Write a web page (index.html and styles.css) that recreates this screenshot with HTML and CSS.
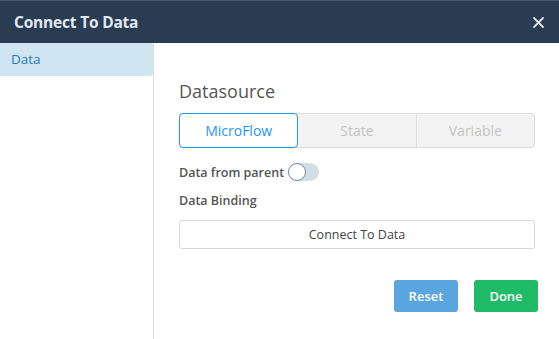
FILE: index.html
```html
<!DOCTYPE html>
<html lang="en">
<head>
    <meta charset="UTF-8">
    <title>Connect To Data</title>
    <link rel="stylesheet" href="styles.css">
</head>
<body>
    <div class="modal">
        <div class="modal-header">
            <span class="modal-title">Connect To Data</span>
            <span class="close">
                <svg width="11" height="11" viewBox="0 0 11 11"><path d="M1 1L10 10M10 1L1 10" stroke="#dfe6ee" stroke-width="1.8" stroke-linecap="round"/></svg>
            </span>
        </div>
        <div class="modal-body">
            <div class="sidebar">
                <div class="side-item active">Data</div>
            </div>
            <div class="content">
                <div class="heading">Datasource</div>
                <div class="segments">
                    <div class="segment selected">MicroFlow</div>
                    <div class="segment">State</div>
                    <div class="segment">Variable</div>
                </div>
                <div class="field-row">
                    <span class="label">Data from parent</span>
                    <span class="toggle"><span class="knob"></span></span>
                </div>
                <div class="label binding">Data Binding</div>
                <div class="connect-btn">Connect To Data</div>
                <div class="actions">
                    <button class="btn reset">Reset</button>
                    <button class="btn done">Done</button>
                </div>
            </div>
        </div>
    </div>
</body>
</html>
```

FILE: styles.css
```css
body {
    margin: 0;
    font-family: 'Open Sans', 'Noto Sans', sans-serif;
    background: #fff;
    color: #555;
}

.modal {
    width: 559px;
    height: 339px;
    display: flex;
    flex-direction: column;
    overflow: hidden;
}

.modal-header {
    height: 43px;
    background: #293c51;
    border-top: 1px solid #46586b;
    box-sizing: border-box;
    display: flex;
    align-items: center;
    justify-content: space-between;
    padding: 0 15px 0 14px;
}

.modal-title {
    color: #e3e8f2;
    font-size: 15.5px;
    font-weight: 700;
    letter-spacing: -0.2px;
}

.close {
    display: flex;
    width: 11px;
    height: 11px;
}

.modal-body {
    flex: 1;
    display: flex;
}

.sidebar {
    width: 153px;
    border-right: 1px solid #dcdcdc;
}

.side-item {
    height: 33px;
    line-height: 33px;
    padding-left: 11px;
    font-size: 13.5px;
    color: #2a7cb0;
}

.side-item.active {
    background: #cfe5f1;
    border-radius: 0 3px 3px 0;
}

.content {
    flex: 1;
    padding: 35px 24px 0 25px;
}

.heading {
    font-size: 18px;
    color: #555;
    line-height: 26px;
    margin-bottom: 9px;
}

.segments {
    display: flex;
    height: 35px;
    border: 1px solid #dedede;
    border-radius: 4px;
    background: #f3f3f3;
    box-sizing: border-box;
}

.segment {
    flex: 1;
    display: flex;
    align-items: center;
    justify-content: center;
    font-size: 14px;
    color: #c4c4c4;
    border-left: 1px solid #dedede;
}

.segment:first-child {
    border-left: none;
}

.segment.selected {
    background: #fff;
    color: #2196f3;
    border: 1px solid #2196f3;
    border-radius: 4px;
    margin: -1px 0 -1px -1px;
}

.segment.selected + .segment {
    border-left: none;
}

.field-row {
    display: flex;
    align-items: center;
    gap: 4px;
    margin-top: 14px;
    height: 20px;
}

.label {
    font-size: 12.5px;
    font-weight: 600;
    color: #555;
}

.toggle {
    width: 31px;
    height: 18px;
    border-radius: 9px;
    background: #d3dde5;
    position: relative;
}

.knob {
    position: absolute;
    left: 0;
    top: 0;
    width: 16px;
    height: 16px;
    border-radius: 50%;
    background: #fff;
    border: 1px solid #7d8a95;
}

.binding {
    margin-top: 9px;
    line-height: 20px;
}

.connect-btn {
    margin-top: 9px;
    height: 29px;
    border: 1px solid #d8d8d8;
    border-radius: 3px;
    box-sizing: border-box;
    display: flex;
    align-items: center;
    justify-content: center;
    font-size: 12.5px;
    color: #444;
}

.actions {
    display: flex;
    justify-content: flex-end;
    gap: 16px;
    margin-top: 31px;
    margin-right: -3px;
}

.btn {
    width: 64px;
    height: 32px;
    border: none;
    border-radius: 3px;
    color: #fff;
    font-family: inherit;
    font-size: 13px;
    font-weight: 600;
}

.reset {
    background: #5aa5e0;
}

.done {
    background: #1fbb66;
}
```
